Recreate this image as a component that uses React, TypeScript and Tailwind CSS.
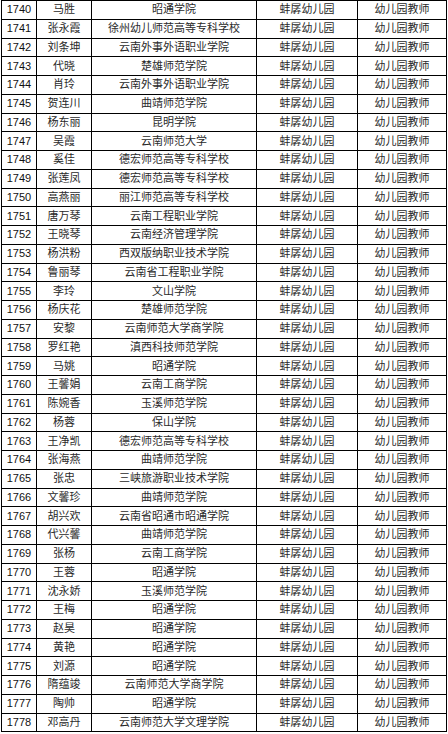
import React from "react";

const rows: [string, string, string][] = [
  ["1740", "马胜", "昭通学院"],
  ["1741", "张永霞", "徐州幼儿师范高等专科学校"],
  ["1742", "刘条坤", "云南外事外语职业学院"],
  ["1743", "代晓", "楚雄师范学院"],
  ["1744", "肖玲", "云南外事外语职业学院"],
  ["1745", "贺连川", "曲靖师范学院"],
  ["1746", "杨东丽", "昆明学院"],
  ["1747", "吴霞", "云南师范大学"],
  ["1748", "奚佳", "德宏师范高等专科学校"],
  ["1749", "张莲凤", "德宏师范高等专科学校"],
  ["1750", "高燕丽", "丽江师范高等专科学校"],
  ["1751", "唐万琴", "云南工程职业学院"],
  ["1752", "王晓琴", "云南经济管理学院"],
  ["1753", "杨洪粉", "西双版纳职业技术学院"],
  ["1754", "鲁丽琴", "云南省工程职业学院"],
  ["1755", "李玲", "文山学院"],
  ["1756", "杨庆花", "楚雄师范学院"],
  ["1757", "安黎", "云南师范大学商学院"],
  ["1758", "罗红艳", "滇西科技师范学院"],
  ["1759", "马姚", "昭通学院"],
  ["1760", "王馨娟", "云南工商学院"],
  ["1761", "陈婉香", "玉溪师范学院"],
  ["1762", "杨蓉", "保山学院"],
  ["1763", "王净凯", "德宏师范高等专科学校"],
  ["1764", "张海燕", "曲靖师范学院"],
  ["1765", "张忠", "三峡旅游职业技术学院"],
  ["1766", "文馨珍", "曲靖师范学院"],
  ["1767", "胡兴欢", "云南省昭通市昭通学院"],
  ["1768", "代兴馨", "曲靖师范学院"],
  ["1769", "张杨", "云南工商学院"],
  ["1770", "王蓉", "昭通学院"],
  ["1771", "沈永娇", "玉溪师范学院"],
  ["1772", "王梅", "昭通学院"],
  ["1773", "赵昊", "昭通学院"],
  ["1774", "黄艳", "昭通学院"],
  ["1775", "刘源", "昭通学院"],
  ["1776", "隋蕴竣", "云南师范大学商学院"],
  ["1777", "陶帅", "昭通学院"],
  ["1778", "邓高丹", "云南师范大学文理学院"],
];

const cell =
  "flex items-center justify-center border-r border-b border-black overflow-hidden whitespace-nowrap";

export default function App() {
  return (
    <div
      className="w-[448px] h-[734px] bg-white text-[11px] leading-none text-[#2a2a2a]"
      style={{ fontFamily: '"Liberation Sans", "Noto Sans CJK SC", sans-serif' }}
    >
      <div className="ml-[1px] w-[446px] border-l border-t border-black flex flex-col">
        {rows.map(([n, name, school]) => (
          <div key={n} className="flex h-[18.76px]">
            <div className={`${cell} w-[35px] text-[#111]`}>{n}</div>
            <div className={`${cell} w-[55px]`}>{name}</div>
            <div className={`${cell} w-[165px]`}>{school}</div>
            <div className={`${cell} w-[101px]`}>蚌孱幼儿园</div>
            <div className={`${cell} w-[89px]`}>幼儿园教师</div>
          </div>
        ))}
      </div>
    </div>
  );
}
